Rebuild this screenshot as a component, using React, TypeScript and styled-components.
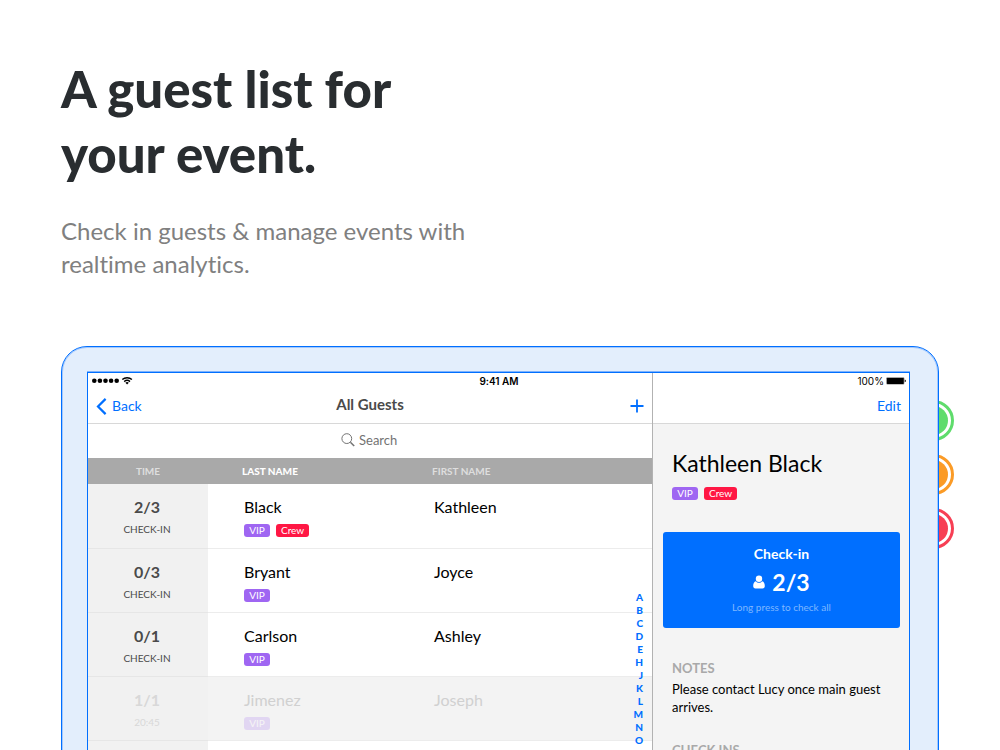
import React from "react";
import styled, { createGlobalStyle } from "styled-components";

const Global = createGlobalStyle`
  *, *::before, *::after { box-sizing: border-box; }
  body {
    margin: 0;
    background: #fff;
    font-family: Lato, "Liberation Sans", sans-serif;
    font-variant-ligatures: none;
    color: #000;
  }
  button, input { font: inherit; }
`;

const blue = "#006fff";

const Page = styled.main`
  height: 100vh;
  overflow: hidden;
  padding: 56px 61px 0;
`;

const Headline = styled.h1`
  margin: 0;
  font-size: 51px;
  line-height: 65px;
  font-weight: 900;
  color: #292d30;
`;

const Lead = styled.p`
  margin: 28px 0 66px;
  font-size: 24px;
  line-height: 33px;
  color: #808080;
`;

const Stage = styled.div`
  position: relative;
`;

const Device = styled.section`
  position: relative;
  padding: 25px 28px 25px 25px;
  border: 1px solid ${blue};
  border-radius: 26px;
  background: #e3eefc;
  box-shadow: inset 0 0 0 1px #a3c8fd;
`;

const Dots = styled.ul`
  position: absolute;
  top: 54px;
  right: -15px;
  margin: 0;
  padding: 0;
  list-style: none;
  display: flex;
  flex-direction: column;
  gap: 13px;
`;

const Dot = styled.li<{ $color: string }>`
  width: 41px;
  height: 41px;
  padding: 3px;
  border: 3px solid ${(p) => p.$color};
  border-radius: 50%;
  background: ${(p) => p.$color} content-box;
`;

const Screen = styled.div`
  position: relative;
  display: grid;
  grid-template-columns: minmax(0, 564fr) minmax(0, 257fr);
  border: 1px solid ${blue};
  box-shadow: 0 -1px 0 #7db2fd;
  background: #fff;
`;

const StatusBar = styled.div`
  position: absolute;
  inset: 0 0 auto 0;
  height: 16px;
  padding: 0 3px 0 4px;
  display: grid;
  grid-template-columns: 1fr auto 1fr;
  align-items: center;
  font-family: Inter, "Liberation Sans", sans-serif;
  font-size: 10px;
  line-height: 16px;
`;

const StatusSide = styled.div<{ $end?: boolean }>`
  display: flex;
  align-items: center;
  gap: 2px;
  justify-content: ${(p) => (p.$end ? "flex-end" : "flex-start")};
`;

const Clock = styled.time`
  font-weight: 600;
`;

const Pane = styled.section<{ $detail?: boolean }>`
  padding-top: 16px;
  background: ${(p) => (p.$detail ? "#f4f4f4" : "#fff")};
  border-left: ${(p) => (p.$detail ? "1px solid #b2b2b2" : "none")};
`;

const NavBar = styled.header<{ $detail?: boolean }>`
  height: ${(p) => (p.$detail ? "51px" : "35px")};
  margin-top: ${(p) => (p.$detail ? "-16px" : "0")};
  padding: ${(p) => (p.$detail ? "16px 8px 0" : "0 8px")};
  display: grid;
  grid-template-columns: 1fr auto 1fr;
  align-items: center;
  background: #fff;
  border-bottom: 1px solid #d8d8d8;
`;

const NavTitle = styled.h2`
  margin: 0;
  font-size: 15px;
  line-height: 30px;
  font-weight: 700;
  color: #4a4a4a;
  align-self: start;
`;

const NavButton = styled.button<{ $end?: boolean }>`
  grid-column: ${(p) => (p.$end ? 3 : 1)};
  justify-self: ${(p) => (p.$end ? "end" : "start")};
  display: flex;
  align-items: center;
  gap: 5px;
  padding: 0;
  border: 0;
  background: none;
  color: ${blue};
  font-size: 14px;
  line-height: 18px;
  cursor: pointer;
`;

const SearchBar = styled.label`
  display: flex;
  justify-content: center;
  align-items: center;
  gap: 4px;
  height: 34px;
  padding: 0 0 2px 2px;
`;

const SearchInput = styled.input`
  width: 42px;
  padding: 0;
  border: 0;
  outline: 0;
  background: none;
  font-size: 13px;
  line-height: 18px;
  &::placeholder { color: #737373; opacity: 1; }
`;

const TableWrap = styled.div`
  position: relative;
`;

const Table = styled.table`
  width: 100%;
  table-layout: fixed;
  border-collapse: collapse;
`;

const HeadCell = styled.th<{ $active?: boolean; $time?: boolean }>`
  height: 26px;
  width: ${(p) => (p.$time ? "120px" : p.$active ? "190px" : "auto")};
  padding: ${(p) => (p.$time ? "0" : "0 0 0 34px")};
  text-align: ${(p) => (p.$time ? "center" : "left")};
  background: #a9a9a9;
  color: ${(p) => (p.$active ? "#fff" : "#dedede")};
  font-size: 10px;
  line-height: 14px;
  font-weight: ${(p) => (p.$active ? 900 : 700)};
`;

const Row = styled.tr<{ $done?: boolean }>`
  height: 64px;
  background: ${(p) => (p.$done ? "#f3f3f3" : "#fff")};
  color: ${(p) => (p.$done ? "#d0d0d0" : "#000")};
`;

const TimeCell = styled.td<{ $done?: boolean }>`
  padding: 10px 2px 0 0;
  vertical-align: top;
  text-align: center;
  background: #f1f1f1;
  border-bottom: 1px solid #e6e6e6;
  color: ${(p) => (p.$done ? "#d8d8d8" : "#4a4a4a")};
`;

const Count = styled.strong`
  display: block;
  font-size: 16px;
  line-height: 26px;
  font-weight: 700;
`;

const CountNote = styled.span`
  display: block;
  font-size: 10px;
  line-height: 18px;
`;

const NameCell = styled.td`
  padding: 10px 0 0 36px;
  vertical-align: top;
  border-bottom: 1px solid #ececec;
  font-size: 16px;
  line-height: 26px;
`;

const Tags = styled.div<{ $faded?: boolean }>`
  display: flex;
  gap: 6px;
  padding-top: 4px;
  opacity: ${(p) => (p.$faded ? 0.2 : 1)};
`;

const Tag = styled.span<{ $crew?: boolean }>`
  padding: 0 5px;
  min-width: 26px;
  border-radius: 3px;
  background: ${(p) => (p.$crew ? "#ff1744" : "#9f66f2")};
  color: #fff;
  font-size: 10px;
  line-height: 13px;
  text-align: center;
`;

const IndexList = styled.nav`
  position: absolute;
  top: 133px;
  right: 9px;
  display: flex;
  flex-direction: column;
  align-items: flex-end;
`;

const IndexLink = styled.a`
  color: ${blue};
  text-decoration: none;
  font-size: 10px;
  line-height: 13px;
  font-weight: 900;
`;

const Detail = styled.div`
  padding: 24px 9px 0 10px;
`;

const GuestHead = styled.div`
  padding: 0 9px;
`;

const GuestName = styled.h3`
  margin: 0 0 5px;
  font-size: 23px;
  line-height: 30px;
  font-weight: 400;
`;

const CheckInButton = styled.button`
  display: flex;
  flex-direction: column;
  align-items: center;
  width: 100%;
  margin: 32px 0 30px;
  padding: 11px 0 12px;
  border: 0;
  border-radius: 3px;
  background: ${blue};
  color: #fff;
  cursor: pointer;
`;

const CheckInLabel = styled.span`
  font-size: 14px;
  line-height: 22px;
  font-weight: 700;
`;

const CheckInCount = styled.span`
  display: flex;
  align-items: center;
  gap: 7px;
  font-size: 23px;
  line-height: 34px;
  font-weight: 700;
`;

const CheckInHint = styled.span`
  font-size: 10px;
  line-height: 17px;
  color: #7fb7ff;
`;

const Block = styled.section`
  padding: 0 9px;
  margin-bottom: 24px;
`;

const BlockTitle = styled.h4`
  margin: 0;
  font-size: 13px;
  line-height: 20px;
  font-weight: 700;
  color: #a9a9a9;
`;

const BlockText = styled.p`
  margin: 2px 0 0;
  font-size: 13px;
  line-height: 18px;
`;

type TagName = "VIP" | "Crew";

interface Guest {
  count: string;
  note: string;
  last: string;
  first: string;
  tags: TagName[];
  done?: boolean;
}

const guests: Guest[] = [
  { count: "2/3", note: "CHECK-IN", last: "Black", first: "Kathleen", tags: ["VIP", "Crew"] },
  { count: "0/3", note: "CHECK-IN", last: "Bryant", first: "Joyce", tags: ["VIP"] },
  { count: "0/1", note: "CHECK-IN", last: "Carlson", first: "Ashley", tags: ["VIP"] },
  { count: "1/1", note: "20:45", last: "Jimenez", first: "Joseph", tags: ["VIP"], done: true },
];

const letters = ["A", "B", "C", "D", "E", "H", "J", "K", "L", "M", "N", "O", "P"];

function TagList({ tags, faded }: { tags: TagName[]; faded?: boolean }) {
  return (
    <Tags $faded={faded}>
      {tags.map((t) => (
        <Tag key={t} $crew={t === "Crew"}>{t}</Tag>
      ))}
    </Tags>
  );
}

function Signal() {
  return (
    <svg width="41" height="10" viewBox="0 0 41 10" role="img" aria-label="Signal">
      {[2.3, 7.9, 13.5, 19.1, 24.7].map((x) => (
        <circle key={x} cx={x} cy="4.8" r="2.3" />
      ))}
      <g fill="none" stroke="#000" strokeWidth="1.4">
        <path d="M30.3 3.6a7 7 0 0 1 9.6 0" />
        <path d="M32.2 5.6a4.4 4.4 0 0 1 5.800 0" />
      </g>
      <path d="M33.4 6.8a2.6 2.6 0 0 1 3.4 0L35.1 8.6z" />
    </svg>
  );
}

function Battery() {
  return (
    <svg width="20" height="8" viewBox="0 0 20 8" role="img" aria-label="Battery">
      <rect x="0.3" y="0.3" width="18" height="7.2" rx="1" fill="#8a8a8a" />
      <rect x="0.9" y="0.9" width="16.8" height="6" rx="0.6" />
      <path d="M18.7 2.6q1.2.3 1.2 1.3t-1.2 1.3z" />
    </svg>
  );
}

function Person() {
  return (
    <svg width="12" height="14" viewBox="0 0 12 14" fill="#fff" aria-hidden="true">
      <path d="M2.9 6.2C1 6.7 0.2 8.6 0.2 11C0.2 12.600 1 13.500 2.400 13.500H9.600C11 13.500 11.800 12.600 11.800 11C11.800 8.600 11 6.700 9.100 6.200C8.300 7.200 7.300 7.700 6 7.700C4.700 7.700 3.700 7.200 2.900 6.200Z" />
      <circle cx="6" cy="3.7" r="3.2" />
    </svg>
  );
}

export default function App() {
  return (
    <Page>
      <Global />
      <Headline>A guest list for<br />your event.</Headline>
      <Lead>Check in guests &amp; manage events with<br />realtime analytics.</Lead>
      <Stage>
        <Dots aria-hidden="true">
          <Dot $color="#5fdc6c" />
          <Dot $color="#fb9b26" />
          <Dot $color="#f73f54" />
        </Dots>
        <Device>
          <Screen>
            <Pane>
              <NavBar>
                <NavButton type="button">
                  <svg width="11" height="17" viewBox="0 0 11 17" fill="none" stroke={blue} strokeWidth="2.2" aria-hidden="true">
                    <path d="M9.6 0.9 2 8.5l7.6 7.6" />
                  </svg>
                  Back
                </NavButton>
                <NavTitle>All Guests</NavTitle>
                <NavButton type="button" $end aria-label="Add guest">
                  <svg width="14" height="14" viewBox="0 0 14 14" stroke={blue} strokeWidth="1.8" aria-hidden="true">
                    <path d="M7 .5v13M.5 7h13" />
                  </svg>
                </NavButton>
              </NavBar>
              <SearchBar>
                <svg width="14" height="14" viewBox="0 0 14 14" fill="none" stroke="#737373" aria-hidden="true">
                  <circle cx="5.8" cy="5.6" r="4.9" strokeWidth="1" />
                  <path d="M9.4 9.2 13.2 13" strokeWidth="1.5" />
                </svg>
                <SearchInput type="text" placeholder="Search" aria-label="Search" />
              </SearchBar>
              <TableWrap>
                <Table>
                  <thead>
                    <tr>
                      <HeadCell $time>TIME</HeadCell>
                      <HeadCell $active>LAST NAME</HeadCell>
                      <HeadCell>FIRST NAME</HeadCell>
                    </tr>
                  </thead>
                  <tbody>
                    {guests.map((g) => (
                      <Row key={g.last} $done={g.done}>
                        <TimeCell $done={g.done}>
                          <Count>{g.count}</Count>
                          <CountNote>{g.note}</CountNote>
                        </TimeCell>
                        <NameCell>
                          {g.last}
                          <TagList tags={g.tags} faded={g.done} />
                        </NameCell>
                        <NameCell>{g.first}</NameCell>
                      </Row>
                    ))}
                    <Row>
                      <TimeCell />
                      <NameCell />
                      <NameCell />
                    </Row>
                  </tbody>
                </Table>
                <IndexList aria-label="Alphabet">
                  {letters.map((l) => (
                    <IndexLink key={l} href={"#" + l}>{l}</IndexLink>
                  ))}
                </IndexList>
              </TableWrap>
            </Pane>
            <Pane $detail>
              <NavBar $detail>
                <NavButton type="button" $end>Edit</NavButton>
              </NavBar>
              <Detail>
                <GuestHead>
                  <GuestName>Kathleen Black</GuestName>
                  <TagList tags={["VIP", "Crew"]} />
                </GuestHead>
                <CheckInButton type="button">
                  <CheckInLabel>Check-in</CheckInLabel>
                  <CheckInCount>
                    <Person />
                    2/3
                  </CheckInCount>
                  <CheckInHint>Long press to check all</CheckInHint>
                </CheckInButton>
                <Block>
                  <BlockTitle>NOTES</BlockTitle>
                  <BlockText>Please contact Lucy once main guest arrives.</BlockText>
                </Block>
                <Block>
                  <BlockTitle>CHECK INS</BlockTitle>
                </Block>
              </Detail>
            </Pane>
            <StatusBar>
              <StatusSide><Signal /></StatusSide>
              <Clock>9:41 AM</Clock>
              <StatusSide $end>100% <Battery /></StatusSide>
            </StatusBar>
          </Screen>
        </Device>
      </Stage>
    </Page>
  );
}
